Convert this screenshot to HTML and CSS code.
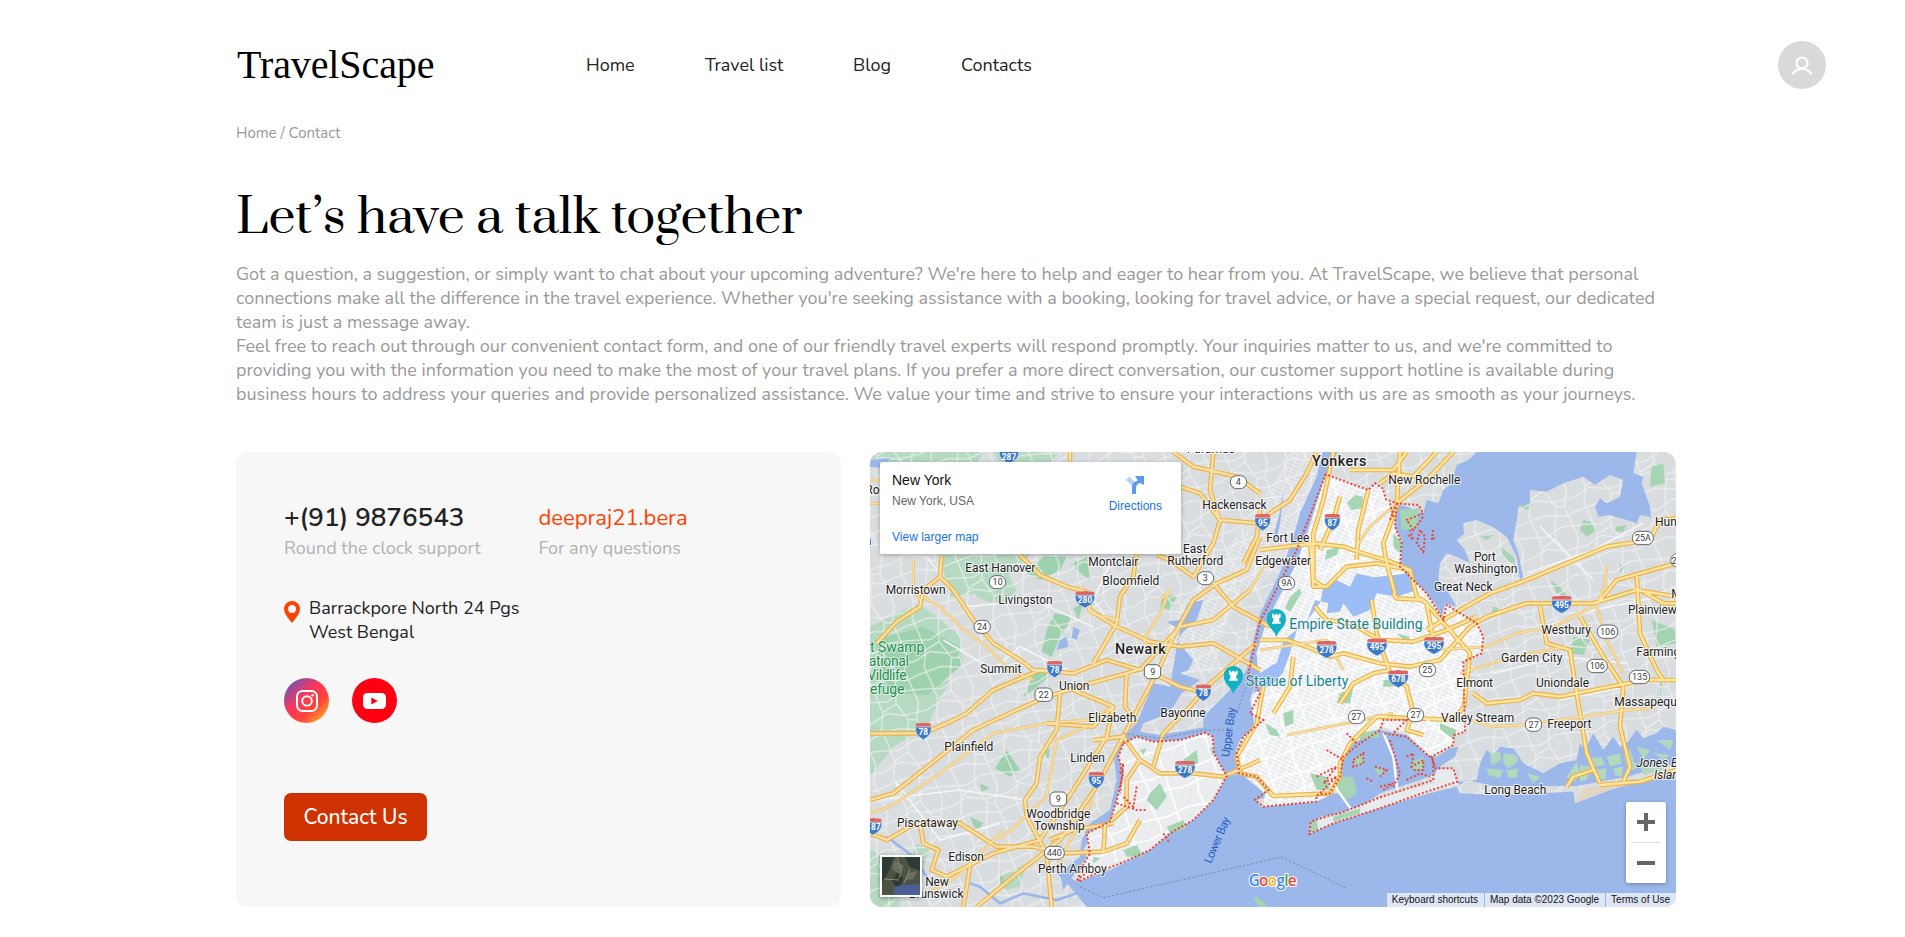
FILE: index.html
```html
<!DOCTYPE html>
<html lang="en">
<head>
<meta charset="utf-8">
<title>TravelScape - Contact</title>
<link rel="stylesheet" href="styles.css">
</head>
<body>
<header class="header">
  <a class="logo">TravelScape</a>
  <nav class="nav"><a class="n-home">Home</a><a class="n-list">Travel list</a><a class="n-blog">Blog</a><a class="n-contacts">Contacts</a></nav>
  <svg class="avatar" viewBox="0 0 48 48"><circle cx="24" cy="24" r="24" fill="#d9d9d9"/><g fill="none" stroke="#fff" stroke-width="2.200" stroke-linecap="round"><circle cx="24" cy="22" r="5.500"/><path d="M15 32.300c4.500-6 13.500-6 18 0"/></g></svg>
</header>
<main class="page">
  <div class="crumbs">Home / Contact</div>
  <h1 class="title">Let’s have a talk together</h1>
  <div class="intro">
    <p>Got a question, a suggestion, or simply want to chat about your upcoming adventure? We're here to help and eager to hear from you. At TravelScape, we believe that personal connections make all the difference in the travel experience. Whether you're seeking assistance with a booking, looking for travel advice, or have a special request, our dedicated team is just a message away.</p>
    <p>Feel free to reach out through our convenient contact form, and one of our friendly travel experts will respond promptly. Your inquiries matter to us, and we're committed to providing you with the information you need to make the most of your travel plans. If you prefer a more direct conversation, our customer support hotline is available during business hours to address your queries and provide personalized assistance. We value your time and strive to ensure your interactions with us are as smooth as your journeys.</p>
  </div>
  <div class="columns">
    <section class="card">
      <div class="reach">
        <div class="reach-col"><div class="phone">+(91) 9876543</div><div class="hint">Round the clock support</div></div>
        <div class="reach-col"><div class="mail">deepraj21.bera</div><div class="hint">For any questions</div></div>
      </div>
      <div class="address">
        <svg class="pin" viewBox="0 0 16 22"><path fill="#ff4103" fill-rule="evenodd" d="M8 0a8 8 0 0 1 8 8c0 5-4.500 9-8 14C4.500 17 0 13 0 8a8 8 0 0 1 8-8zm0 4a4 4 0 1 0 0 8 4 4 0 0 0 0-8z"/></svg>
        <div><div>Barrackpore North 24 Pgs</div><div>West Bengal</div></div>
      </div>
      <div class="social">
        <svg viewBox="0 0 45 45"><defs><linearGradient id="ig" x1="0.1" y1="0.1" x2="0.9" y2="0.95"><stop offset="0" stop-color="#7352b4"/><stop offset=".4" stop-color="#fd3759"/><stop offset=".68" stop-color="#ff4338"/><stop offset="1" stop-color="#ffb02c"/></linearGradient></defs><circle cx="22.500" cy="22.500" r="22.500" fill="url(#ig)"/><g fill="none" stroke="#fff" stroke-width="2"><rect x="13" y="13" width="20" height="20" rx="5.500"/><circle cx="23" cy="23" r="4.800"/></g><circle cx="28.500" cy="17.300" r="1.300" fill="#fff"/></svg>
        <svg viewBox="0 0 45 45"><circle cx="22.500" cy="22.500" r="22.500" fill="#ff0012"/><rect x="11" y="15" width="23" height="16" rx="4.500" fill="#fff"/><path d="M19.300 19.500v7l6.500-3.500z" fill="#ff0012"/></svg>
      </div>
      <a class="button">Contact Us</a>
    </section>
    <section class="map">
      <svg class="map-art" viewBox="30 36 2418 1365">
        <defs>
          <pattern id="suburb" width="170" height="150" patternUnits="userSpaceOnUse" patternTransform="rotate(-14)"><path d="M0 20L60 32 110 12 170 20M0 84L50 66 98 84 170 84M0 126L70 118 130 134 170 126M30 0L38 60 22 110 30 150M92 0L84 44 108 100 92 150M140 0L150 55 132 105 140 150M38 60L84 44M108 100L132 105" fill="none" stroke="#eff1f2" stroke-width="3"/></pattern>
          <pattern id="city" width="44" height="34" patternUnits="userSpaceOnUse" patternTransform="rotate(24)"><path d="M0 5H44M0 17H44M0 28H44M8 0V34M31 0V34" fill="none" stroke="#fff" stroke-width="3"/></pattern>
          <pattern id="wide" width="150" height="120" patternUnits="userSpaceOnUse" patternTransform="rotate(-18)"><path d="M0 30L70 40 150 30M0 90L80 80 150 90M40 0L50 60 40 120M110 0V120" fill="none" stroke="#fff" stroke-width="5"/></pattern>
          <symbol id="i3" viewBox="0 0 60 52" preserveAspectRatio="none"><path d="M3 3Q10 0 16 2L30 0 44 2Q50 0 57 3L59 12H1z" fill="#dd6460"/><path d="M1 13H59C62 34 46 43 30 51 14 43-2 34 1 13z" fill="#3d79c9" stroke="#fff" stroke-width="1.500"/></symbol>
          <g id="fort"><path d="M0 42C-5 22-29 12-29-13a29 29 0 0 1 58 0C29 12 5 22 0 42z" fill="#14b1c3"/><path d="M-13-28h6v5h4v-5h6v5h4v-5h6v11l-4 3v10h4v6h-26v-6h4v-10l-4-3z" fill="#fff"/></g>
          <path id="nyc" d="M1397 103L1470 130 1525 150 1545 130 1568 145 1578 178 1610 190 1605 260 1625 310 1620 380 1660 420 1700 460 1750 540 1760 495 1850 550 1870 590 1865 640 1810 665 1815 875 1782 885 1780 915 1715 950 1640 880 1560 860 1480 910 1440 965 1440 1040 1400 1070 1368 1085 1210 1100 1215 1060 1150 1000 1130 960 1140 900 1185 860 1175 780 1195 700 1190 640 1220 545 1310 370 1345 270z"/>
          <path id="si" d="M790 910L830 890 880 905 960 900 1035 878 1058 890 1062 940 1100 1008 1060 1080 1000 1140 930 1180 870 1230 800 1262 730 1290 655 1325 660 1290 690 1240 680 1180 750 1145 770 1080 790 1000 775 950z"/>
          <path id="minor-roads" d="M190 470L240 500 300 560 380 620 450 690 520 720M30 120H70M30 190H60M160 360V440L180 480M900 480L930 450 900 520 850 600 870 620M1720 630L1880 620 1970 580 2080 560 2200 500M1800 700L1960 650 2120 620M1200 630L1400 600 1450 690M1280 885L1460 850 1550 830 1600 820M1830 840L1900 860 1980 855 2100 840 2300 810 2380 805M2240 380L2235 430 2210 500 2240 600 2290 700M1610 190L1530 260 1490 320M660 440L690 520 780 540M30 1120L90 1100 240 1000 400 880 560 850 680 840 760 800M420 1200L560 1070 590 900 680 860M430 1170L290 1310 200 1360M1225 360L1170 450M590 1290L620 1220 700 1080"/>
          <path id="nj-roads" d="M30 880L190 880 260 850 320 820 400 750 470 720 540 690 640 700 740 660 840 690 960 560 1060 540 1170 450M30 1080L100 1060 240 950 340 870 470 810 560 770 690 730 800 700 860 680M245 350L240 410 280 450 340 540 400 610 480 660 520 690 640 700M240 410L190 450 180 500 110 545 50 610M480 345L540 405 620 440 680 455 690 510 760 555 870 605 960 620 1060 610 1200 690M630 36V70M940 36L1000 80 1130 110 1200 160M960 140L1020 160 1080 240 1200 250M1060 36L1050 150 1080 240 1060 310 1000 410 930 360 890 345M830 340L820 410 780 470 770 550 700 670M1200 290L1160 390 1070 430 1000 480 940 590 900 680 800 870 710 1040 600 1200 460 1310 350 1401M1060 430L1120 500 1230 560M1200 210L1190 290 1150 370M800 700L795 800 830 850M1200 240L1290 180 1340 100 1370 36M600 760L590 870 540 950 530 1030 495 1080 500 1130 560 1240 575 1401M570 1200L640 1170 760 1150M640 750L760 800 740 890 640 1050 540 1200 400 1240 260 1310M30 1180L80 1200 150 1160 180 1150 300 1150 410 1220 520 1220 600 1240 730 1235M180 1150L190 1210 235 1230 215 1290 260 1310M330 1280L310 1401M700 900L790 890 840 960 900 1000 1000 1000 1090 1010 1200 960M730 1240L735 1160 800 1100 800 1020 840 960M730 1235L800 1210 840 1140M880 980L910 880 990 800 1040 740 1190 610M860 690L960 740 1040 760M760 800L700 860 560 850"/>
          <path id="ny-roads" d="M1200 600L1280 600 1340 620 1410 650 1450 640 1560 670 1650 680 1740 660 1830 560 1880 530 2000 490 2200 490 2330 450 2448 470M1365 500L1400 540 1470 550 1560 600 1660 605 1760 570 1850 530M1200 330L1360 310 1450 320 1540 350 1580 360 1650 390 1670 470 1700 490 1720 600M1650 390L1550 370 1460 380 1400 440 1360 440 1350 300M1300 650L1290 740 1240 820M1420 36L1390 180 1360 280 1360 420 1390 440M1620 36L1610 200 1570 310 1580 370 1605 460M1365 500L1390 530M1535 480L1550 580 1590 700 1640 740 1660 820 1640 870 1690 885M1600 460L1610 475 1690 480 1760 560 1830 640 1812 800 1780 840 1550 830 1470 910 1440 970 1440 1010 1410 1060 1240 1068 1190 1010 1140 1000 1130 950 1190 850 1210 740M1840 760L1880 790 1980 780 2020 760 2100 770 2250 740 2360 720H2448M2040 500L2060 610 2130 630 2150 760 2180 940 2220 1030M2160 530L2230 650 2290 740 2280 860 2310 980 2290 1025M2120 1040L2140 1010 2200 990M2220 1035L2340 1025 2448 990M2330 400L2340 580 2390 690 2410 720M1700 570L1800 510 1890 460 2000 420 2120 370 2240 320 2370 300 2400 240 2448 235M2220 480L2270 420 2448 370M2340 450L2410 490 2448 490M1440 170L1420 240 1380 330M1525 150L1495 270 1490 360M1560 130L1600 100 1660 110 1730 36M1470 90L1600 90 1640 36M1610 190L1710 110 1780 36M1440 790L1480 730 1540 700 1590 690"/>
        </defs>
        <rect x="30" y="36" width="2418" height="1365" fill="#dadde0"/>
        <g fill="#b6d9c2">
          <path d="M30 36H370L340 90 400 130 300 180 200 90 110 110 30 60zM400 36H600L540 100 430 90z"/>
          <path d="M30 560L70 540 170 490 230 530 300 590 310 670 200 760 120 850 30 900z"/>
          <path d="M240 345H510L440 410 360 460 270 470zM340 420L430 380 470 450 420 500 350 470z"/>
          <path d="M30 890L100 810 200 740 270 720 200 860 100 920 30 1010zM30 1230L110 1270 120 1401 30 1401zM170 1210L210 1230 190 1280 155 1250zM420 1310L500 1270 480 1340 430 1350z"/>
        </g>
        <g fill="#9ed1ad">
          <path d="M45 600L190 560 300 620 300 680 200 765 90 760z"/><path d="M585 520L638 530 600 590 575 650 545 635 560 570zM640 505L670 490 655 540zM910 460L950 470 930 510 900 500zM440 930L480 990 450 1010 405 985zM520 700L590 690 520 750 490 770zM360 1030L390 1045 365 1055zM330 1130L370 1150 350 1175zM420 1300L440 1330 420 1340zM545 940L570 925 565 960zM500 400L550 350 620 350 600 390 540 420zM640 370L680 350 690 420 650 390z"/>
        </g>
        <g fill="#a3d3b1"><path d="M1990 180L2020 185 2005 210 1985 205zM2170 240L2190 245 2210 270 2180 290 2160 270zM2270 260L2300 255 2290 275 2260 275zM1860 290L1900 285 1880 300zM1920 320L1960 350 1970 380 1930 350zM2070 420L2100 440 2120 470 2090 460zM2140 590L2190 600 2170 645 2130 640zM2280 370L2295 380 2280 400zM2375 540L2448 570 2448 610 2390 620zM1900 500L1920 505 1910 525 1895 520zM2410 700L2400 780 2390 770z"/></g>
        <rect x="30" y="36" width="2418" height="1365" fill="url(#suburb)"/>
        <path d="M1100 540L1280 350 1330 220 1390 36H1300L1180 220 1080 360 940 520 900 700 1060 700z" fill="url(#city)" opacity=".4"/>
        <g fill="#9cb8eb">
          <path d="M1850 36L1825 60 1790 75 1775 130 1750 150 1735 190 1700 180 1690 220 1640 200 1600 190 1605 260 1625 300 1620 380 1670 430 1700 465 1725 490 1745 530 1755 490 1790 500 1760 450 1735 420 1740 370 1760 340 1790 350 1830 370 1815 330 1790 300 1812 282 1810 250 1850 240 1900 262 1940 290 1970 350 1980 420 1990 410 1975 340 1960 300 1970 240 1975 200 2010 190 2010 150 2060 155 2110 130 2170 110 2205 135 2250 105 2290 120 2280 170 2240 190 2220 175 2205 200 2215 230 2250 225 2330 250 2340 225 2370 230 2375 250 2370 200 2345 130 2350 110 2320 100 2330 36z"/>
          <path d="M1388 36L1370 110 1320 220 1300 290 1270 375 1235 450 1200 520 1180 600 1160 690 1120 740 1060 800 1030 830 1030 870 1060 890 1062 940 1100 1012 1135 1000 1128 930 1140 900 1185 860 1170 780 1195 700 1190 640 1220 545 1310 370 1345 270 1400 110 1432 36z"/>
          <path d="M920 545L960 540 985 490 1030 480 1010 540 970 575 950 600 1000 660 985 690 960 700 1020 720 965 760 940 800 900 830 850 850 840 875 900 885 1040 860 1060 880 960 905 880 910 830 895 800 915 785 965 800 1000 780 1080 765 1130 690 1190 670 1230 680 1250 630 1320 610 1350 600 1300 660 1250 665 1200 690 1150 750 1110 770 1020 760 940 790 890 830 850 880 730 930 740 950 620 960 570z"/>
          <path d="M580 1290L655 1325 750 1290 870 1230 930 1180 1000 1140 1060 1080 1100 1012 1140 1000 1190 1040 1225 1070 1190 1080 1200 1100 1370 1085 1370 1062 1440 1060 1500 1100 1440 1120 1380 1130 1350 1160 1348 1182 1420 1150 1560 1105 1700 1062 1790 1040 1800 1060 1900 1065 2140 1055 2145 1090 2250 1050 2448 990V1401H680L630 1340z"/>
          <path d="M1860 970L1880 930 1900 945 1920 920 1960 925 1990 970 2050 1000 2100 970 2150 960 2160 910 2175 930 2200 880 2230 930 2260 890 2280 920 2300 910 2330 870 2350 895 2390 880 2410 860 2448 870V970L2300 1010 2150 1038 1900 1038 1820 1020 1800 1035 1790 1025 1850 1020z"/>
          <path d="M1270 150L1258 220 1240 290 1250 300 1262 240zM600 600L620 590 625 620 590 630zM640 560L660 570 650 600 635 595zM30 60L90 55 70 85 30 80z"/>
        </g>
        <path d="M700 1310L650 1360 590 1380 490 1360 420 1390 360 1340 330 1330M80 1190L160 1250 200 1310" fill="none" stroke="#9cb8eb" stroke-width="8"/>
        <g fill="#b2d8bf"><path d="M1890 940L1920 935 1925 960 1895 975zM1930 940L1970 945 1975 965 1945 985 1930 970zM1880 985L1930 990 1920 1015 1885 1005zM1940 990L1975 985 1970 1015 1945 1012zM2120 1010L2150 965 2160 1000 2145 1025zM2160 975L2195 980 2180 1020 2160 1025zM2190 955L2225 950 2235 975 2200 980zM2200 990L2240 985 2235 1020 2205 1015zM2240 950L2280 940 2285 970 2250 980zM2260 985L2290 980 2285 1010 2265 1005zM2290 940L2310 930 2330 985 2305 995zM2330 920L2370 930 2350 960zM2000 1000L2040 1010 2020 1030zM2390 900L2440 900 2430 930zM2340 980L2400 970 2410 990 2350 1005zM2380 940L2430 945 2410 960z"/></g>
        <path d="M2145 1090L2170 1045 2300 1030 2448 990V1000L2250 1048z" fill="#e2d5c2"/>
        <use href="#nyc" fill="#e8eaed"/><use href="#nyc" fill="url(#city)"/><use href="#nyc" fill="url(#wide)"/>
        <path d="M1650 400L1600 405 1540 412 1490 400 1470 440 1430 420 1390 445 1380 490 1350 530 1310 570 1290 640 1268 700 1240 730 1180 760 1195 690 1250 670 1272 600 1340 545 1365 480 1405 490 1400 520 1440 515 1450 490 1480 530 1530 510 1550 460 1610 470 1670 450z" fill="#9cbdf5"/>
        <path d="M1190 640L1220 545 1310 370 1370 470 1335 540 1272 595 1250 665 1200 700z" fill="#e8eaed"/><path d="M1190 640L1220 545 1310 370 1370 470 1335 540 1272 595 1250 665 1200 700z" fill="url(#city)"/>
        <path d="M1440 970L1480 910 1560 870 1640 885 1700 945 1730 950 1770 925 1795 920 1785 950 1740 980 1740 995 1680 1020 1560 1060 1500 1105 1470 1110 1440 1010z" fill="#9cb8eb"/>
        <path d="M1348 1182L1350 1145 1420 1130 1560 1072 1720 1030 1730 990 1780 985 1790 1030 1700 1060 1560 1102 1420 1150z" fill="#e8eaed"/>
        <use href="#si" fill="#e8eaed"/><use href="#si" fill="url(#wide)"/><use href="#si" fill="url(#city)" opacity=".3"/>
        <g fill="#a6d5b3">
          <path d="M1485 165L1510 170 1505 205 1475 210 1460 190zM1620 210L1680 205 1670 265 1625 270zM1600 280L1628 310 1620 340 1600 320zM1290 470L1320 445 1325 460 1290 515 1275 505zM1400 330L1440 320 1430 345 1395 360zM1215 850L1250 870 1260 890 1230 885zM1270 820L1300 810 1300 850 1275 860zM1495 880L1550 870 1560 890 1500 900zM1430 1010L1480 1010 1490 1060 1460 1080 1435 1050zM1350 1000L1400 1010 1410 1050 1370 1050zM1350 1145L1370 1140 1375 1170 1350 1178zM1420 1130L1500 1105 1500 1120 1420 1145zM1740 850L1790 870 1780 900 1740 870zM1440 760L1480 745 1470 790 1430 790zM1570 720L1610 720 1600 740 1570 740zM1610 580L1650 590 1640 610zM1480 960L1510 940 1510 970 1490 980zM1540 980L1570 990 1560 1010zM1650 970L1690 950 1690 990 1660 990z"/>
          <path d="M870 1060L900 1030 920 1070 890 1110 860 1080zM920 1160L970 1140 980 1165 930 1180zM790 1230L830 1215 850 1250 800 1250zM840 930L860 925 850 945zM970 960L1010 930 1015 970 980 980zM1050 920L1062 930 1058 950zM700 1250L720 1255 700 1270zM1180 1375L1190 1370 1225 1401H1200z"/>
        </g>
        <path d="M2375 80L2410 70 2415 130 2370 140z" fill="#a6d5b3"/>
        <path class="local" d="M200 350L320 500 520 480 700 560M250 600L400 690 480 620 640 700M40 1080L300 1050 500 1080M110 1030L240 1200 420 1150M760 350L700 480 760 560M2000 580L2200 510 2448 460M1900 700L2100 650 2300 670M2000 400L2200 330 2350 250M2040 260L2200 420M2100 780L2300 740"/>
        <g class="road">
          <use class="edge thin" href="#minor-roads"/><use class="edge" href="#nj-roads"/><use class="edge" href="#ny-roads"/>
          <use class="core thin" href="#minor-roads"/><use class="core" href="#nj-roads"/><use class="core bright" href="#ny-roads"/>
        </g>
        <path d="M1570 880L1600 950 1612 1050M1425 1040L1475 1110M1700 840L1775 900" fill="none" stroke="#fff" stroke-width="7"/>
        <g class="border"><use href="#si"/><path d="M1200 545L1310 330 1397 103 1470 130 1525 150 1545 130 1568 145 1578 178 1610 190 1675 195 1690 220 1640 240 1660 270 1690 230M1610 190L1605 260 1625 310 1620 380 1660 420 1700 460 1750 540 1760 495 1850 550 1870 590 1865 640 1810 665 1815 875 1782 885 1780 915 1715 950 1725 985 1780 985 1792 1025 1700 1055 1560 1105 1420 1150 1348 1182 1352 1145 1410 1125 1440 1120 1560 1072 1720 1020 1720 960 1640 890 1570 880M1200 545L1165 700 1200 760 1170 820 1210 840 1150 890 1130 940 1138 1000 1190 1010 1225 1050 1185 1080 1210 1100 1368 1085 1370 1065 1410 1060 1440 1010 1450 950 1500 910 1560 870 1570 840 1640 840 1600 880M1590 900L1620 1000 1600 1040M1480 960L1510 940 1510 970 1480 980zM1640 950L1660 940 1655 980 1690 960 1690 990 1660 990M1545 980L1580 990 1560 1010M1400 930L1450 960M1370 1010L1430 980 1390 1030 1430 1010 1380 1060M1645 285L1660 300 1650 270M1680 270L1670 310 1690 335 1695 290zM1720 270L1715 300 1728 290M1460 880L1490 910M780 1000L790 970 780 1060M770 1090L830 1110 860 1110M830 1040L820 1100 790 1070M650 1320L690 1290M910 1180L930 1210M1520 1015L1540 1025M1560 1040L1600 1030 1570 1050M1640 1020L1680 1000 1710 1010M1590 190L1600 230M1605 200L1590 240"/></g>
        <path d="M660 1340L730 1373 1265 1251 1460 1345M790 880L900 895 1030 870 1110 870 1160 740" fill="none" stroke="#74839d" stroke-width="2.500" stroke-dasharray="7 6"/>
        <g><use href="#i3" x="417" y="20" width="60" height="52"/><use href="#i3" x="645" y="453" width="60" height="52"/><use href="#i3" x="560" y="662" width="48" height="52"/><use href="#i3" x="1184" y="221" width="48" height="52"/><use href="#i3" x="1393" y="221" width="48" height="52"/><use href="#i3" x="1369" y="602" width="62" height="54"/><use href="#i3" x="1520" y="595" width="62" height="54"/><use href="#i3" x="1691" y="590" width="62" height="54"/><use href="#i3" x="2074" y="467" width="62" height="54"/><use href="#i3" x="1584" y="690" width="62" height="54"/><use href="#i3" x="166" y="848" width="48" height="52"/><use href="#i3" x="1006" y="733" width="48" height="52"/><use href="#i3" x="944" y="962" width="62" height="54"/><use href="#i3" x="685" y="995" width="48" height="52"/><use href="#i3" x="12" y="1134" width="54" height="52"/></g>
        <g class="ishield"><text x="447" y="61">287</text><text x="675" y="488">280</text><text x="584" y="699">78</text><text x="1208" y="258">95</text><text x="1417" y="257">87</text><text x="1400" y="639">278</text><text x="1551" y="630">495</text><text x="1722" y="627">295</text><text x="2105" y="503">495</text><text x="1615" y="727">678</text><text x="190" y="884">78</text><text x="1030" y="769">78</text><text x="975" y="999">278</text><text x="709" y="1031">95</text><text x="47" y="1169">87</text></g>
        <g class="plate"><rect x="1111" y="107" width="49" height="39" rx="19"/><rect x="388" y="407" width="49" height="39" rx="19"/><rect x="1012" y="395" width="49" height="39" rx="19"/><rect x="342" y="541" width="49" height="39" rx="19"/><rect x="853" y="674" width="49" height="42" rx="14"/><rect x="525" y="744" width="52" height="40" rx="14"/><rect x="570" y="1056" width="50" height="42" rx="14"/><rect x="553" y="1219" width="60" height="39" rx="19"/><rect x="1255" y="410" width="49" height="39" rx="19"/><rect x="1678" y="670" width="49" height="40" rx="19"/><rect x="1465" y="811" width="49" height="40" rx="19"/><rect x="1642" y="805" width="49" height="40" rx="19"/><rect x="1996" y="834" width="49" height="40" rx="19"/><rect x="2317" y="274" width="63" height="40" rx="19"/><rect x="2212" y="555" width="61" height="40" rx="19"/><rect x="2181" y="658" width="61" height="40" rx="19"/><rect x="2308" y="691" width="61" height="40" rx="19"/><rect x="2432" y="341" width="50" height="40" rx="19"/></g>
        <g class="plate-num"><text x="1135" y="136">4</text><text x="413" y="436">10</text><text x="1036" y="424">3</text><text x="366" y="570">24</text><text x="878" y="705">9</text><text x="551" y="774">22</text><text x="595" y="1087">9</text><text x="583" y="1248">440</text><text x="1280" y="439">9A</text><text x="1702" y="700">25</text><text x="1489" y="841">27</text><text x="1667" y="835">27</text><text x="2021" y="864">27</text><text x="2349" y="304">25A</text><text x="2243" y="585">106</text><text x="2212" y="688">106</text><text x="2339" y="721">135</text><text x="2442" y="371">2</text></g>
        <use href="#fort" x="1249" y="549"/><use href="#fort" x="1120" y="720"/>
        <g class="town">
          <text x="980" y="38" textLength="145">Paramus</text><text x="16" y="163">Roc</text><text x="14" y="314">n</text>
          <text x="1027" y="207" textLength="193">Hackensack</text><text x="969" y="339" textLength="70">East</text><text x="922" y="375" textLength="168">Rutherford</text><text x="685" y="378" textLength="150">Montclair</text><text x="727" y="435" textLength="171">Bloomfield</text><text x="316" y="396" textLength="210">East Hanover</text><text x="77" y="462" textLength="180">Morristown</text><text x="415" y="493" textLength="163">Livingston</text><text x="361" y="699" textLength="123">Summit</text><text x="597" y="750" textLength="91">Union</text><text x="685" y="847" textLength="144">Elizabeth</text><text x="901" y="831" textLength="136">Bayonne</text><text x="253" y="933" textLength="147">Plainfield</text><text x="631" y="966" textLength="104">Linden</text><text x="499" y="1134" textLength="192">Woodbridge</text><text x="522" y="1171" textLength="152">Township</text><text x="111" y="1161" textLength="183">Piscataway</text><text x="265" y="1263" textLength="107">Edison</text><text x="534" y="1299" textLength="206">Perth Amboy</text><text x="196" y="1338" textLength="70">New</text><text x="147" y="1374" textLength="164">Brunswick</text>
          <text x="1219" y="306" textLength="129">Fort Lee</text><text x="1186" y="375" textLength="167">Edgewater</text><text x="1585" y="132" textLength="216">New Rochelle</text><text x="1842" y="363" textLength="65">Port</text><text x="1783" y="399" textLength="189">Washington</text><text x="1722" y="453" textLength="176">Great Neck</text><text x="2385" y="258">Hun</text><text x="2434" y="474">M</text><text x="2304" y="522" textLength="146">Plainview</text><text x="2044" y="583" textLength="149">Westbury</text><text x="2329" y="648">Farming</text><text x="1923" y="667" textLength="184">Garden City</text><text x="1789" y="742" textLength="110">Elmont</text><text x="2028" y="742" textLength="159">Uniondale</text><text x="2263" y="799">Massapequ</text><text x="1743" y="847" textLength="220">Valley Stream</text><text x="2062" y="865" textLength="132">Freeport</text><text x="1873" y="1063" textLength="186">Long Beach</text>
          <g font-style="italic"><text x="2329" y="982">Jones B</text><text x="2382" y="1017">Islan</text></g>
          <g class="big"><text x="1356" y="78" textLength="163">Yonkers</text><text x="765" y="642" textLength="152">Newark</text></g>
        </g>
        <g class="poi teal"><text x="1288" y="567" textLength="400">Empire State Building</text><text x="1157" y="738" textLength="308">Statue of Liberty</text></g>
        <g class="poi green"><text x="30" y="636" textLength="163">t Swamp</text><text x="26" y="678" textLength="121">ational</text><text x="22" y="719" textLength="118">Vildlife</text><text x="30" y="762" textLength="103">efuge</text></g>
        <g class="bay"><text transform="translate(1108 952) rotate(-83)" textLength="150">Upper Bay</text><text transform="translate(1053 1273) rotate(-67)" textLength="148">Lower Bay</text></g>
        <g class="google"><text x="1166" y="1338" textLength="144"><tspan fill="#4285f4">G</tspan><tspan fill="#ea4335">o</tspan><tspan fill="#fbbc04">o</tspan><tspan fill="#4285f4">g</tspan><tspan fill="#34a853">l</tspan><tspan fill="#ea4335">e</tspan></text></g>
      </svg>
      <div class="place">
        <div class="place-info"><div class="place-name">New York</div><div class="place-sub">New York, USA</div><a class="place-link">View larger map</a></div>
        <div class="directions"><svg viewBox="0 0 18 18"><path d="M0 4L3.500.5 9.500 6.500 6.500 10z" fill="#b4d1fa"/><path d="M6 18V11C6 7.500 8 5.500 12 4.500L9 0H18V9L14 7C11 8 10 9.500 10 12v6z" fill="#5b9ae8"/></svg><span>Directions</span></div>
      </div>
      <svg class="thumb" viewBox="0 0 42 42"><rect width="42" height="42" fill="#fff"/><path d="M2 2h38v38H2z" fill="#4b5344"/><path d="M2 2h12L8 18 2 28zM25 2h15v14L30 12zM12 26l6-10 5 8-4 12z" fill="#2e3a32"/><path d="M14 5l10 6-5 8-7-5zM28 18l9-2-3 8-8 1z" fill="#6d6d5b"/><path d="M17 2l2 8 3 5-3 8M24 28l6-14M4 24l15 1" stroke="#8a8b75" fill="none"/><path d="M13 40l2-8 9-3 5 1 11-1v11z" fill="#4a5f96"/></svg>
      <div class="zoom"><span class="plus"></span><i></i><span class="minus"></span></div>
      <div class="legal"><span>Keyboard shortcuts</span><span>Map data ©2023 Google</span><span>Terms of Use</span></div>
    </section>
  </div>
</main>
</body>
</html>
```
FILE: styles.css
```css
* { box-sizing: border-box; }
body { margin: 0; background: #fff; color: #222; font-family: Nunito, Lato, "Open Sans", sans-serif; font-size: 18px; line-height: 24px; overflow: hidden; height: 937px; }
p, h1 { margin: 0; }
.header { display: flex; align-items: center; height: 130px; padding: 0 79px 0 237px; }
.logo { width: 349px; letter-spacing: -.1px; font: 40px/48px "Liberation Serif", serif; color: #000; }
.nav { display: flex; flex: 1; }
.n-home { width: 119px; }
.n-list { width: 148px; }
.n-blog { width: 108px; }
.avatar { width: 48px; height: 48px; }
.page { width: 1440px; margin-left: 236px; }
.crumbs { height: 24px; margin-top: -9px; font-size: 15px; color: #999; }
.title { margin-top: 40px; height: 66px; font: 400 48px/66px Prata, "Liberation Serif", serif; color: #000; white-space: nowrap; }
.intro { margin-top: 11px; color: #999; }
.columns { display: flex; gap: 29px; margin-top: 46px; }
.card { width: 605px; height: 455px; padding: 48px; background: #f7f7f7; border-radius: 12px; }
.reach { display: flex; padding-top: 1px; }
.reach-col { width: 255px; white-space: nowrap; }
.phone { font-size: 26px; font-weight: 650; line-height: 34px; height: 35px; }
.mail { font-size: 22px; line-height: 34px; height: 35px; color: #ff4103; }
.hint { color: #b2b2b2; line-height: 24px; height: 27px; }
.address { display: flex; gap: 9px; margin-top: 33px; }
.pin { width: 16px; height: 22px; margin-top: 5px; }
.social { display: flex; gap: 23px; margin-top: 34px; }
.social svg { width: 45px; height: 45px; }
.button { display: flex; align-items: center; justify-content: center; width: 143px; height: 48px; margin-top: 70px; border-radius: 7px; background: #d03100; color: #fff; font-size: 21px; font-weight: 500; }
.map { position: relative; width: 806px; height: 455px; border-radius: 12px; overflow: hidden; font-family: Roboto, sans-serif; }
.map-art { display: block; width: 806px; height: 455px; }
.local { fill: none; stroke: #f4f5f6; stroke-width: 5; }
.road { fill: none; stroke-linejoin: round; }
.edge { stroke: #eeb33f; stroke-width: 14; }
.core { stroke: #f5e0ae; stroke-width: 7; }
.edge.thin { stroke: #efc676; stroke-width: 9; }
.core.thin { stroke-width: 4; }
.core.bright { stroke: #fde6a6; }
.border { fill: none; stroke: #e94637; stroke-width: 6; stroke-dasharray: 6 6; }
.ishield { font-size: 25px; font-weight: 700; fill: #fff; text-anchor: middle; }
.plate { fill: #fff; stroke: #5f6368; stroke-width: 3; }
.plate-num { font-size: 27px; fill: #3c4043; text-anchor: middle; }
.town { font-size: 36px; fill: #202124; stroke: #fff; stroke-width: 6; stroke-opacity: .75; paint-order: stroke; stroke-linejoin: round; }
.big { font-size: 43px; font-weight: 500; }
.poi { font-size: 42px; stroke: #fff; stroke-width: 5; stroke-opacity: .7; paint-order: stroke; }
.teal { fill: #14838e; }
.green { fill: #1e8e4e; }
.bay { font-size: 35px; fill: #2b62c0; }
.google { font-family: "Open Sans", sans-serif; font-size: 46px; font-weight: 600; stroke: #fff; stroke-width: 6; paint-order: stroke; }
.place { position: absolute; left: 10px; top: 10px; width: 301px; height: 92px; display: flex; justify-content: space-between; padding: 9px 19px 0 12px; background: #fff; border-radius: 2px; box-shadow: 0 1px 4px rgba(0,0,0,.3); font: 12px/16px "Liberation Sans", sans-serif; }
.place-name { font-size: 14px; line-height: 18px; color: #111; }
.place-sub { margin-top: 4px; color: #666; }
.place-link { display: block; margin-top: 20px; color: #1a73e8; }
.directions { display: flex; flex-direction: column; align-items: center; padding-top: 5px; color: #1a73e8; }
.directions svg { width: 18px; height: 18px; margin-bottom: 4px; }
.thumb { position: absolute; left: 10px; top: 403px; width: 42px; height: 42px; box-shadow: 0 1px 4px rgba(0,0,0,.4); }
.zoom { position: absolute; left: 756px; top: 350px; width: 40px; height: 81px; display: flex; flex-direction: column; align-items: center; padding-top: 11px; background: #fff; border-radius: 2px; box-shadow: 0 1px 4px rgba(0,0,0,.3); }
.zoom i { width: 30px; height: 1px; margin: 11px 0 18px; background: #e0e0e0; }
.plus { width: 18px; height: 18px; background: linear-gradient(#666, #666) center/18px 4px no-repeat, linear-gradient(#666, #666) center/4px 18px no-repeat; }
.minus { width: 18px; height: 4px; background: #666; }
.legal { position: absolute; right: 0; bottom: 0; display: flex; gap: 1px; font: 10px/14px "Liberation Sans", sans-serif; color: #111; white-space: nowrap; }
.legal span { padding: 0 6px 0 5px; background: rgba(239,241,247,.8); }
```
